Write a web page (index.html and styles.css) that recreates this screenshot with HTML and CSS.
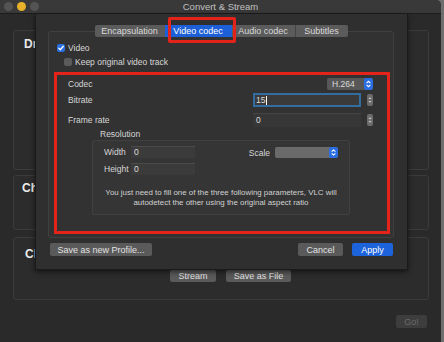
FILE: index.html
```html
<!DOCTYPE html>
<html>
<head>
<meta charset="utf-8">
<link rel="stylesheet" href="styles.css">
</head>
<body>
<div class="win">
  <div class="titlebar">
    <div class="lights"><span class="light"></span><span class="light yellow"></span><span class="light"></span></div>
    <div class="title">Convert &amp; Stream</div>
    <div></div>
  </div>
  <div class="wcontent">
    <div class="gbox b1"><div class="gtitle t1">Dr</div></div>
    <div class="gbox b2"><div class="gtitle t2">Ch</div></div>
    <div class="gbox b3"><div class="gtitle t3">Cl</div>
      <div class="destbtns"><span class="btn stream">Stream</span><span class="btn savefile">Save as File</span></div>
    </div>
    <div class="gorow"><span class="btn go">Go!</span></div>
  </div>

  <div class="sheet">
    <div class="tabs">
      <span class="tab first w1">Encapsulation</span><span class="tab sel w2">Video codec</span><span class="tab w3">Audio codec</span><span class="tab last w4">Subtitles</span>
    </div>
    <div class="tabhl"></div>
    <div class="tabbox">
      <div class="chkrow r1"><span class="chk on"><svg viewBox="0 0 8 8" width="8" height="8"><path d="M1.7 4.1 L3.3 5.7 L6.3 2.3" stroke="#fff" stroke-width="1.3" fill="none" stroke-linecap="round" stroke-linejoin="round"/></svg></span><span>Video</span></div>
      <div class="chkrow r2"><span class="chk"></span><span>Keep original video track</span></div>
      <div class="redbox">
        <div class="row r-codec"><span class="lbl">Codec</span>
          <span class="popup codec"><span class="pv">H.264</span><span class="parrow"><svg viewBox="0 0 9 12" width="9" height="12"><path d="M2.6 5.2 L4.5 3.3 L6.4 5.2 M2.6 6.8 L4.5 8.7 L6.4 6.8" stroke="#fff" stroke-width="1.1" fill="none"/></svg></span></span>
        </div>
        <div class="row r-bitrate"><span class="lbl">Bitrate</span>
          <span class="field focus">15<span class="caret"></span></span>
          <span class="stepper"><svg viewBox="0 0 6 12" width="6" height="12"><rect x="0" y="0" width="6" height="12" rx="2" fill="#6b6b6b"/><path d="M1.5 5 L3 3.3 L4.5 5 Z M1.5 7 L3 8.7 L4.5 7 Z" fill="#cfcfcf"/></svg></span>
        </div>
        <div class="row r-frame"><span class="lbl">Frame rate</span>
          <span class="field">0</span>
          <span class="stepper"><svg viewBox="0 0 6 12" width="6" height="12"><rect x="0" y="0" width="6" height="12" rx="2" fill="#6b6b6b"/><path d="M1.5 5 L3 3.3 L4.5 5 Z M1.5 7 L3 8.7 L4.5 7 Z" fill="#cfcfcf"/></svg></span>
        </div>
        <div class="reslabel">Resolution</div>
        <div class="resbox">
          <div class="restop">
            <div class="rescol">
              <div class="resrow"><span class="rlbl">Width</span><span class="sfield">0</span></div>
              <div class="resrow hrow"><span class="rlbl">Height</span><span class="sfield">0</span></div>
            </div>
            <div class="scale"><span class="slbl">Scale</span>
              <span class="popup spop"><span class="pv"></span><span class="parrow"><svg viewBox="0 0 9 11" width="9" height="11"><path d="M2.6 4.7 L4.5 2.9 L6.4 4.7 M2.6 6.3 L4.5 8.1 L6.4 6.3" stroke="#fff" stroke-width="1.1" fill="none"/></svg></span></span>
            </div>
          </div>
          <div class="msg">You just need to fill one of the three following parameters, VLC will<br>autodetect the other using the original aspect ratio</div>
        </div>
      </div>
    </div>
    <div class="sheetbtns">
      <span class="btn saveprof">Save as new Profile...</span>
      <span class="spacer"></span>
      <span class="btn cancel">Cancel</span>
      <span class="btn apply">Apply</span>
    </div>
  </div>
</div>
</body>
</html>
```

FILE: styles.css
```css
* { box-sizing: border-box; }
body {
  margin: 0;
  width: 444px;
  height: 342px;
  overflow: hidden;
  background: #6e6e6e;
  font-family: "Liberation Sans", Arial, sans-serif;
}
.win {
  position: relative;
  width: 441px;
  height: 342px;
  background: #2a2a2a;
  border-top-right-radius: 5px;
  overflow: hidden;
}
.titlebar {
  height: 14px;
  background: #393939;
  border-bottom: 1px solid #1c1c1c;
  display: grid;
  grid-template-columns: 1fr auto 1fr;
  align-items: center;
}
.lights { display: flex; gap: 4px; padding-left: 4px; }
.light { width: 9px; height: 9px; border-radius: 50%; background: #545454; }
.light.yellow { background: #e8b12a; }
.title { font-size: 9.5px; color: #c0c0c0; }

.wcontent { padding: 16px 12px 0 13px; }
.gbox {
  border: 1px solid #3b3b3b;
  border-radius: 3px;
  background: #2c2c2c;
}
.b1 { height: 140px; }
.b2 { margin-top: 5px; height: 55px; }
.b3 { margin-top: 7px; height: 63px; }
.gtitle {
  font-size: 12px;
  line-height: 14px;
  font-weight: bold;
  color: #ececec;
  white-space: nowrap;
}
.t1 { padding: 6px 0 0 10px; }
.t2 { padding: 5px 0 0 8px; }
.t3 { padding: 9px 0 0 11px; }
.destbtns { display: flex; gap: 10px; padding-left: 156px; margin-top: 9px; }

.btn {
  height: 13px;
  background: #5a5a5a;
  color: #e2e2e2;
  font-size: 9px;
  border-radius: 2px;
  display: flex;
  align-items: center;
  justify-content: center;
  white-space: nowrap;
}
.stream { width: 46px; height: 12px; }
.savefile { width: 65px; height: 12px; }
.gorow { display: flex; justify-content: flex-end; margin-top: 15px; padding-right: 2px; }
.go { width: 31px; background: #3d3d3d; color: #6a6a6a; }

.sheet {
  position: absolute;
  left: 35px;
  top: 14px;
  width: 373px;
  height: 256px;
  background: #2f2f2f;
  border: 1px solid #1a1a1a;
  border-top: none;
  box-shadow: 0 2px 5px rgba(0,0,0,0.55);
  padding: 11px 13px 0 12px;
}
.tabs { display: flex; justify-content: center; height: 12px; position: relative; z-index: 1; }
.tab {
  background: #5b5b5b;
  color: #dadada;
  font-size: 9px;
  display: flex;
  align-items: center;
  justify-content: center;
  border-left: 1px solid #444;
}
.tab.first { border-left: none; border-radius: 2px 0 0 2px; }
.tab.last { border-radius: 0 2px 2px 0; }
.tab.sel { background: #1d5fd6; color: #fff; border-left: none; }
.w1 { width: 70px; } .w2 { width: 67px; } .w3 { width: 63px; } .w4 { width: 53px; }
.tab.sel + .tab { border-left: none; }

.tabhl {
  position: absolute;
  left: 132px;
  top: 3px;
  width: 68px;
  height: 26px;
  border: 3px solid #e4231b;
  border-radius: 2px;
  z-index: 2;
}

.tabbox {
  margin-top: -6px;
  height: 207px;
  border: 1px solid #404040;
  border-radius: 3px;
  background: #323232;
}
.chkrow { display: flex; align-items: center; gap: 3px; height: 8px; font-size: 8.5px; color: #d8d8d8; white-space: nowrap; }
.r1 { margin-top: 12px; margin-left: 8px; }
.r2 { margin-top: 6px; margin-left: 15px; }
.chk { width: 8px; height: 8px; border-radius: 2px; background: #5b5b5b; display: flex; }
.chk.on { background: #2a6fe0; }

.redbox {
  margin: 6px 3px 0 5px;
  height: 162px;
  border: 3px solid #e4231b;
}
.row { display: flex; align-items: center; padding: 0 14px 0 11px; font-size: 8.5px; color: #d6d6d6; }
.lbl { flex: 1; }
.r-codec { margin-top: 3px; height: 12px; }
.r-bitrate { margin-top: 3px; height: 14px; gap: 6px; }
.r-frame { margin-top: 6px; height: 14px; gap: 6px; }

.popup { display: flex; height: 12px; background: #575757; border-radius: 2px; overflow: hidden; }
.codec { width: 46px; }
.pv { flex: 1; padding-left: 5px; color: #dcdcdc; font-size: 8.5px; line-height: 12px; }
.parrow { width: 9px; background: #2a6de0; border-radius: 2px; display: flex; }

.field {
  width: 108px;
  height: 14px;
  background: #373737;
  border-top: 1px solid #454545;
  color: #dedede;
  font-size: 8.5px;
  line-height: 13px;
  padding-left: 3px;
  display: flex;
  align-items: center;
}
.field.focus { border: 2px solid #336d9e; background: #3a3a3a; padding-left: 1px; }
.caret { width: 1px; height: 9px; background: #fff; margin-left: 1px; }
.stepper { width: 6px; height: 12px; display: flex; }

.reslabel { margin-top: 2px; padding-left: 43px; font-size: 8.5px; line-height: 10px; color: #d6d6d6; }
.resbox {
  margin: 1px 37px 0 35px;
  height: 75px;
  border: 1px solid #404040;
  border-radius: 2px;
  background: #353535;
}
.restop { display: flex; padding: 5px 11px 0 11px; }
.rescol { display: flex; flex-direction: column; gap: 5px; }
.resrow { display: flex; align-items: center; height: 12px; font-size: 8.5px; color: #d6d6d6; }
.rlbl { width: 27px; }
.sfield {
  width: 64px;
  height: 12px;
  background: #3b3b3b;
  border-top: 1px solid #4a4a4a;
  color: #dedede;
  padding-left: 3px;
  line-height: 11px;
}
.scale { margin-left: auto; margin-top: 1px; display: flex; align-items: center; gap: 5px; height: 11px; font-size: 8.5px; color: #d6d6d6; }
.spop { width: 63px; height: 11px; background: #6a6a6a; }
.msg { margin-top: 13px; text-align: center; font-size: 7.9px; line-height: 10px; color: #d2d2d2; white-space: nowrap; }

.sheetbtns { display: flex; margin-top: 5px; padding: 0 1px 0 2px; gap: 9px; }
.spacer { flex: 1; }
.saveprof { width: 102px; }
.cancel { width: 45px; }
.apply { width: 41px; background: #1d63dc; color: #fff; }
```
